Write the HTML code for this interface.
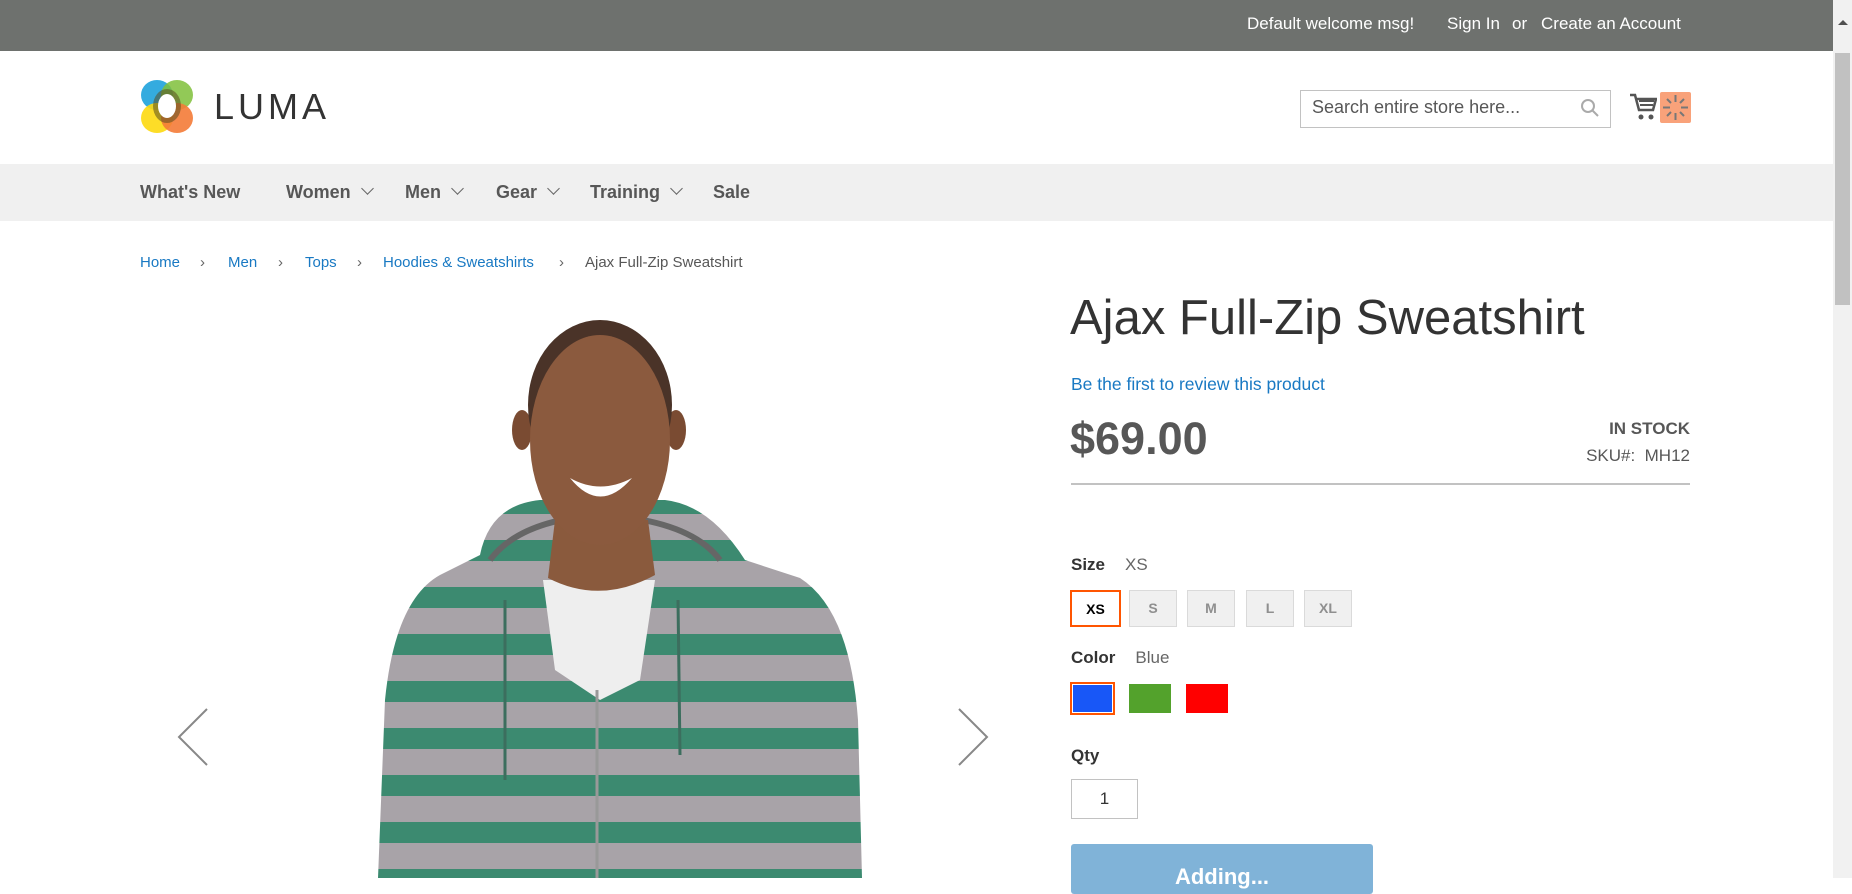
<!DOCTYPE html>
<html><head><meta charset="utf-8"><style>
*{margin:0;padding:0;box-sizing:border-box}
body{width:1852px;height:878px;overflow:hidden;background:#fff;font-family:"Liberation Sans",sans-serif;color:#333;position:relative}
.a{position:absolute;white-space:nowrap}
.top{left:0;top:0;width:1833px;height:51px;background:#6e716e}
.top span{color:#fff;font-size:17px;position:absolute;top:14px}
.nav{left:0;top:164px;width:1833px;height:57px;background:#f0f0f0}
.nav span{position:absolute;top:18px;font-size:18px;font-weight:bold;color:#575757}
.chev{display:inline-block;width:9px;height:9px;border-right:1.6px solid #666;border-bottom:1.6px solid #666;transform:rotate(45deg);margin-left:12px;position:relative;top:-5px}
.bc{top:254px;font-size:15px;color:#1979c3}
.sw{position:absolute;top:590px;height:37px;background:#f0f0f0;border:1px solid #dadada;color:#8f8f8f;font-weight:bold;font-size:14px;text-align:center;line-height:35px}
.cs{position:absolute;top:684px;height:29px}
.sb{left:1833px;top:0;width:19px;height:878px;background:#f1f1f1}
</style></head><body>
<div class="a top">
<span style="left:1247px">Default welcome msg!</span>
<span style="left:1447px">Sign In</span>
<span style="left:1512px">or</span>
<span style="left:1541px">Create an Account</span>
</div>
<svg class="a" style="left:140px;top:79px" width="56" height="55" viewBox="0 0 56 55">
<ellipse cx="17" cy="16" rx="16" ry="15" fill="#1ea2dc" opacity=".9"/>
<ellipse cx="37" cy="16" rx="16" ry="15" fill="#7fbf3a" opacity=".85"/>
<ellipse cx="17" cy="39" rx="16" ry="15" fill="#fdd90f" opacity=".9"/>
<ellipse cx="37" cy="39" rx="16" ry="15" fill="#f47b37" opacity=".9"/>
<ellipse cx="27" cy="27" rx="14" ry="17" fill="#5a4d1f" opacity=".55"/>
<ellipse cx="27" cy="27" rx="9" ry="12" fill="#fff"/>
</svg>
<div class="a" style="left:214px;top:86px;font-size:36px;letter-spacing:4px;color:#333">LUMA</div>
<div class="a" style="left:1300px;top:90px;width:311px;height:38px;border:1px solid #c2c2c2"></div>
<div class="a" style="left:1312px;top:97px;font-size:18px;color:#575757">Search entire store here...</div>
<svg class="a" style="left:1580px;top:98px" width="20" height="20"><circle cx="8" cy="8" r="6" fill="none" stroke="#aaa" stroke-width="2"/><line x1="12.5" y1="12.5" x2="18" y2="18" stroke="#aaa" stroke-width="2"/></svg>
<svg class="a" style="left:1629px;top:92px" width="28" height="30"><path d="M1 3h5l4 15h14l3-11H8" fill="none" stroke="#555" stroke-width="2.5"/><path d="M10 9h15M11 13h13" stroke="#555" stroke-width="2"/><circle cx="12" cy="25" r="2.5" fill="#555"/><circle cx="22" cy="25" r="2.5" fill="#555"/></svg>
<div class="a" style="left:1660px;top:92px;width:31px;height:31px;background:#f9a27a;border-radius:2px"></div>
<svg class="a" style="left:1660px;top:92px" width="31" height="31"><g stroke="#777" stroke-width="2"><line x1="15.5" y1="3" x2="15.5" y2="10"/><line x1="15.5" y1="21" x2="15.5" y2="28"/><line x1="3" y1="15.5" x2="10" y2="15.5"/><line x1="21" y1="15.5" x2="28" y2="15.5"/><line x1="7" y1="7" x2="11" y2="11"/><line x1="20" y1="20" x2="24" y2="24"/><line x1="24" y1="7" x2="20" y2="11"/><line x1="11" y1="20" x2="7" y2="24"/></g></svg>
<div class="a nav">
<span style="left:140px">What's New</span>
<span style="left:286px">Women<i class="chev"></i></span>
<span style="left:405px">Men<i class="chev"></i></span>
<span style="left:496px">Gear<i class="chev"></i></span>
<span style="left:590px">Training<i class="chev"></i></span>
<span style="left:713px">Sale</span>
</div>
<div class="a bc" style="left:140px">Home</div>
<div class="a bc" style="left:200px;color:#666">›</div>
<div class="a bc" style="left:228px">Men</div>
<div class="a bc" style="left:278px;color:#666">›</div>
<div class="a bc" style="left:305px">Tops</div>
<div class="a bc" style="left:357px;color:#666">›</div>
<div class="a bc" style="left:383px">Hoodies &amp; Sweatshirts</div>
<div class="a bc" style="left:559px;color:#666">›</div>
<div class="a bc" style="left:585px;color:#575757">Ajax Full-Zip Sweatshirt</div>

<svg class="a" style="left:0;top:300px" width="1060" height="578" viewBox="0 300 1060 578">
<defs>
<pattern id="st" x="0" y="540" width="10" height="47" patternUnits="userSpaceOnUse">
<rect width="10" height="47" fill="#a8a3a8"/><rect y="0" width="10" height="21" fill="#3c8a70"/>
</pattern>
</defs>
<path d="M378 878 L385 700 Q395 600 440 575 L480 555 Q490 505 540 500 L665 500 Q710 505 745 560 L800 578 Q850 610 858 720 L862 878 Z" fill="url(#st)"/>
<path d="M490 560 Q520 520 600 515 Q690 520 720 560" fill="none" stroke="#666" stroke-width="6"/>
<path d="M543 580 L655 580 L640 680 L600 700 L555 670 Z" fill="#eee"/>
<line x1="597" y1="690" x2="597" y2="878" stroke="#999" stroke-width="3"/>
<line x1="505" y1="600" x2="505" y2="780" stroke="#3c6e5e" stroke-width="3"/>
<line x1="678" y1="600" x2="680" y2="755" stroke="#3c6e5e" stroke-width="3"/>
<path d="M555 520 L648 520 L655 575 Q600 605 548 578 Z" fill="#8a5a3d"/>
<ellipse cx="522" cy="430" rx="10" ry="20" fill="#7a4b32"/>
<ellipse cx="676" cy="430" rx="10" ry="20" fill="#7a4b32"/>
<ellipse cx="600" cy="405" rx="72" ry="85" fill="#4a3328"/>
<ellipse cx="600" cy="440" rx="70" ry="105" fill="#8b5a3e"/>
<path d="M570 478 Q600 495 632 478 Q600 515 570 478Z" fill="#fff"/>
<polyline points="207,709 179,737 207,765" fill="none" stroke="#888" stroke-width="2"/>
<polyline points="959,709 987,737 959,765" fill="none" stroke="#888" stroke-width="2"/>
</svg>

<div class="a" style="left:1070px;top:290px;font-size:49px;font-weight:300;color:#333">Ajax Full-Zip Sweatshirt</div>
<div class="a" style="left:1071px;top:374px;font-size:17.5px;color:#1979c3">Be the first to review this product</div>
<div class="a" style="left:1070px;top:413px;font-size:45px;font-weight:bold;color:#575757">$69.00</div>
<div class="a" style="left:1400px;width:290px;text-align:right;top:419px;font-size:17px;font-weight:bold;color:#575757">IN STOCK</div>
<div class="a" style="left:1400px;width:290px;text-align:right;top:446px;font-size:17px;color:#575757">SKU#:&nbsp; MH12</div>
<div class="a" style="left:1071px;top:483px;width:619px;height:2px;background:#c2c2c2"></div>
<div class="a" style="left:1071px;top:555px;font-size:17px"><b>Size</b><span style="margin-left:20px;color:#666">XS</span></div>
<div class="sw" style="left:1070px;width:51px;background:#fff;border:2px solid #ff5501;color:#000">XS</div>
<div class="sw" style="left:1129px;width:48px">S</div>
<div class="sw" style="left:1187px;width:48px">M</div>
<div class="sw" style="left:1246px;width:48px">L</div>
<div class="sw" style="left:1304px;width:48px">XL</div>
<div class="a" style="left:1071px;top:648px;font-size:17px"><b>Color</b><span style="margin-left:20px;color:#666">Blue</span></div>
<div class="cs" style="left:1070px;top:682px;width:45px;height:33px;border:2px solid #ff5501;background:#1857f7;box-shadow:inset 0 0 0 1px #fff"></div>
<div class="cs" style="left:1129px;width:42px;background:#53a22c"></div>
<div class="cs" style="left:1186px;width:42px;background:#ff0000"></div>
<div class="a" style="left:1071px;top:746px;font-size:17px;font-weight:bold">Qty</div>
<div class="a" style="left:1071px;top:779px;width:67px;height:40px;border:1px solid #c2c2c2;text-align:center;line-height:38px;font-size:17px">1</div>
<div class="a" style="left:1071px;top:844px;width:302px;height:50px;background:#80b3d8;border-radius:3px;color:#fff;font-weight:bold;font-size:22px;text-align:center;padding-top:20px">Adding...</div>
<div class="a sb"></div>
<div class="a" style="left:1835px;top:53px;width:15px;height:252px;background:#c1c1c1"></div>
<div class="a" style="left:1838px;top:20px;width:0;height:0;border-left:5px solid transparent;border-right:5px solid transparent;border-bottom:5px solid #505050"></div>
</body></html>
